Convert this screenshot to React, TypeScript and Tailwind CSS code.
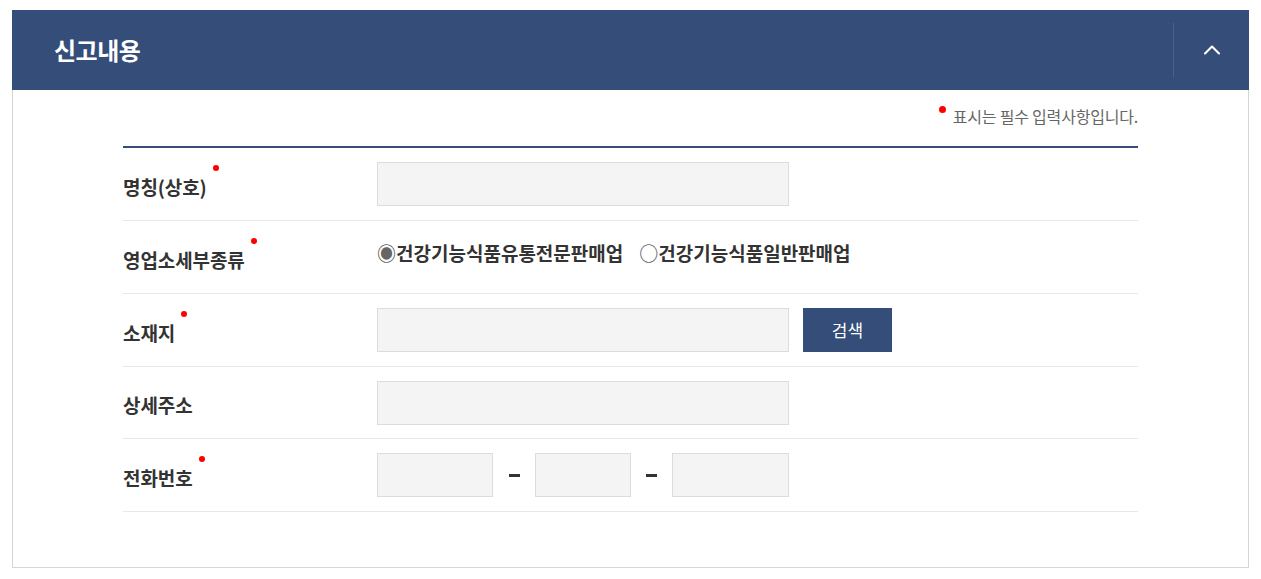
import { ChevronUp } from "lucide-react";

const font = { fontFamily: '"Noto Sans CJK KR", "Noto Sans", sans-serif' };

function Label({ text, required }: { text: string; required?: boolean }) {
  return (
    <div className="w-[254px] shrink-0 pt-[6px]">
      <span className="relative text-[19px] font-bold tracking-[-0.1px] text-[#333]">
        {text}
        {required && <span className="absolute -right-[12px] -top-[8px] h-[6px] w-[6px] rounded-full bg-[#f00]" />}
      </span>
    </div>
  );
}

function Field({ w }: { w: string }) {
  return <div className={`h-[44px] border border-[#dcdcdc] bg-[#f4f4f4] ${w}`} />;
}

function Row({ h = "h-[73px]", children }: { h?: string; children: React.ReactNode }) {
  return <div className={`flex items-center border-b border-[#e8e8e8] ${h}`}>{children}</div>;
}

export default function App() {
  return (
    <div className="bg-white pt-[10px] pl-[12px] pr-[12px]" style={font}>
      <div className="w-[1237px]">
        <div className="flex h-[80px] items-center justify-between bg-[#344d79]">
          <h2 className="pl-[42px] text-[24px] font-bold tracking-[-0.5px] text-white">신고내용</h2>
          <div className="flex h-[54px] w-[76px] items-center justify-center border-l border-[#4b6290]">
            <ChevronUp className="h-[28px] w-[28px] text-white" strokeWidth={1.8} />
          </div>
        </div>
        <div className="border-x border-b border-[#d6d6d6] px-[110px] pb-[55px]">
          <div className="flex justify-end pt-[14px] pb-[18px]">
            <span className="relative text-[16px] tracking-[-0.2px] text-[#666]">
              <span className="absolute -left-[14px] top-[2px] h-[7px] w-[7px] rounded-full bg-[#f00]" />
              표시는 필수 입력사항입니다.
            </span>
          </div>
          <div className="border-t-2 border-[#344d79]">
            <Row>
              <Label text="명칭(상호)" required />
              <Field w="w-[412px]" />
            </Row>
            <Row>
              <Label text="영업소세부종류" required />
              <div className="flex -mt-[8px] items-center text-[19px] font-bold text-[#333]">
                <span className="text-[#666]">◉</span>
                <span>건강기능식품유통전문판매업</span>
                <span className="ml-[16px] text-[#666]">○</span>
                <span>건강기능식품일반판매업</span>
              </div>
            </Row>
            <Row>
              <Label text="소재지" required />
              <Field w="w-[412px]" />
              <button className="ml-[14px] h-[44px] w-[89px] bg-[#344d79] text-[17px] text-white">검색</button>
            </Row>
            <Row h="h-[72px]">
              <Label text="상세주소" />
              <Field w="w-[412px]" />
            </Row>
            <Row>
              <Label text="전화번호" required />
              <Field w="w-[116px]" />
              <span className="flex w-[42px] justify-center">
                <span className="h-[3px] w-[11px] bg-[#333]" />
              </span>
              <Field w="w-[96px]" />
              <span className="flex w-[41px] justify-center">
                <span className="h-[3px] w-[11px] bg-[#333]" />
              </span>
              <Field w="w-[117px]" />
            </Row>
          </div>
        </div>
      </div>
    </div>
  );
}
